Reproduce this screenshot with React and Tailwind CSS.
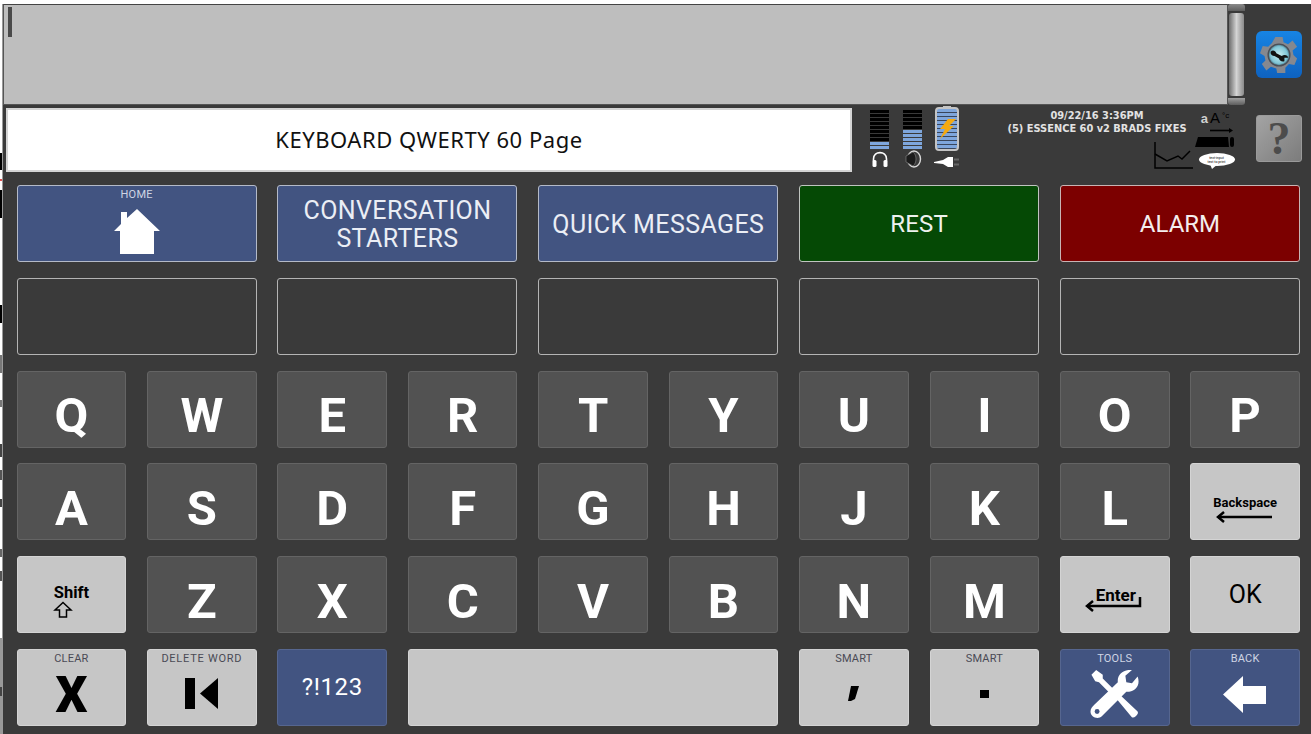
import React from "react";

const strays = [
    "top-[149px] h-[17px] bg-black",
    "top-[175px] h-[2px] bg-[#e05050]",
    "top-[186px] h-[28px] bg-black",
    "top-[301px] h-[18px] bg-black",
    "top-[351px] h-[18px] bg-[#777]",
    "top-[396px] h-[7px] bg-[#777]",
    "top-[440px] h-[13px] bg-[#444]",
    "top-[466px] h-[10px] bg-[#555]",
    "top-[495px] h-[8px] bg-[#444]",
    "top-[545px] h-[8px] bg-[#666]",
    "top-[567px] h-[10px] bg-[#555]",
    "top-[634px] h-[49px] bg-[#999]",
    "top-[683px] h-[9px] bg-[#444]",
    "top-[692px] h-[38px] bg-[#999]",
];

function Key({ children, label, labelClass = "", tone = "dark", className = "" }) {
    const tones = {
        dark: "bg-[#525252] text-white border-[#646464]",
        light: "bg-[#c6c6c6] text-black border-[#d4d4d4]",
        blue: "bg-[#425481] text-white border-[#56668f]",
        outline: "bg-[#3a3a3a] text-white border-[#b4b4b4]",
        bluebright: "bg-[#425481] text-[#ebeef5] border-[#b4bac8]",
        green: "bg-[#054905] text-[#eef2ee] border-[#c0c4c0]",
        red: "bg-[#7c0000] text-[#f4eeee] border-[#c8b4b4]",
    };
    return (
        <div className={`relative flex items-center justify-center rounded-[3px] border text-center ${tones[tone]} ${className}`}>
            {label && (
                <span className={`absolute top-[2px] left-0 right-0 text-[11px] leading-[14px] tracking-[0.2px] ${tone === "light" ? "text-[#4a4a55]" : "text-[#cfd5e4]"} ${labelClass}`}>
                    {label}
                </span>
            )}
            {children}
        </div>
    );
}

function Letter({ ch }) {
    return (
        <Key>
            <span className="text-[49px] leading-none font-bold pt-[13px]">{ch}</span>
        </Key>
    );
}

function HomeIcon() {
    return (
        <svg width="46" height="46" viewBox="0 0 46 46" className="mt-[17px]" fill="white">
            <path d="M23 0 L46 22 L40 22 L40 45 L6 45 L6 22 L0 22 L7 15 L7 3 L13 3 L13 9 Z" />
        </svg>
    );
}

function ToolsIcon() {
    return (
        <svg width="50" height="49" viewBox="0 0 52 52" className="mt-[15px]" fill="white">
            <path d="M1 5 L6 0 L13 5 L13 9 L28 24 L24 28 L9 13 L5 12 Z" />
            <path d="M50 7 C53 15 49 22 41 23 L38 23 L12 49 C8 53 0 50 0 44 C0 41 2 39 4 37 L29 13 C28 5 35 -1 44 0 L37 6 L38 13 L44 14 Z" />
            <path d="M28 31 L32 27 L50 44 C51 46 50 47 48 49 C46 51 44 51 43 49 Z" />
            <circle cx="7" cy="44" r="2.6" fill="#425481" />
        </svg>
    );
}

function BackIcon() {
    return (
        <svg width="44" height="37" viewBox="0 0 44 37" className="mt-[15px]" fill="white">
            <path d="M0 18.5 L20 0 L20 10 L43 10 L43 28 L20 28 L20 37 Z" />
        </svg>
    );
}

function GearButton() {
    return (
        <div className="w-[46px] h-[47px] rounded-[6px] bg-gradient-to-b from-[#1784e4] to-[#0e62c0] flex items-center justify-center">
            <svg width="40" height="38" viewBox="0 0 42 42">
                <defs>
                    <radialGradient id="lens" cx="0.5" cy="0.5" r="0.55">
                        <stop offset="0" stopColor="#c8eef0" />
                        <stop offset="0.7" stopColor="#7fc5d6" />
                        <stop offset="1" stopColor="#2d5364" />
                    </radialGradient>
                </defs>
                <path
                    fill="#85888f"
                    d="M17 1 L25 1 L26 7 L31 9 L36 5 L41 12 L36 16 L37 21 L41 25 L38 32 L32 31 L28 35 L28 41 L19 41 L18 36 L12 34 L7 38 L2 31 L6 27 L5 22 L0 19 L3 11 L9 12 L13 8 Z"
                />
                <circle cx="21" cy="21" r="12" fill="url(#lens)" stroke="#4a4f57" strokeWidth="1.5" />
                <path d="M12 17 C14 15 17 16 18 19 L24 22 C27 20 31 21 31 24 L27 24 L27 28 C24 29 21 27 21 25 L16 22 C13 22 11 20 12 17 Z" fill="#111" />
            </svg>
        </div>
    );
}

function HelpButton() {
    return (
        <div className="w-[46px] h-[47px] rounded-[3px] border border-[#9a9a9a] bg-gradient-to-br from-[#a4a4a4] to-[#7c7c7c] flex items-center justify-center">
            <span className="font-['Liberation_Serif',serif] font-bold text-[46px] leading-none text-[#4c4c4c]">?</span>
        </div>
    );
}

function Meter({ filled }) {
    const rows = Array.from({ length: 10 });
    return (
        <div className="flex flex-col gap-[1px] w-[19px]">
            {rows.map((_, i) => (
                <div key={i} className={`h-[3px] ${i >= 10 - filled ? "bg-[#7ea6dc]" : "bg-black"}`} />
            ))}
        </div>
    );
}

function StatusIcons() {
    return (
        <div className="flex w-[148px] shrink-0 pl-[18px] pt-[2px] gap-[14px]">
            <div className="flex flex-col items-center gap-[1px]">
                <Meter filled={2} />
                <svg width="18" height="18" viewBox="0 0 18 18" fill="none">
                    <path d="M2.5 11 V9 C2.5 0.5 15.5 0.5 15.5 9 V11" stroke="white" strokeWidth="1.6" />
                    <rect x="1.5" y="10" width="4" height="7" rx="1.5" fill="white" />
                    <rect x="12.5" y="10" width="4" height="7" rx="1.5" fill="white" />
                </svg>
            </div>
            <div className="flex flex-col items-center gap-[1px]">
                <Meter filled={5} />
                <svg width="18" height="18" viewBox="0 0 18 18" fill="none">
                    <ellipse cx="10" cy="9" rx="6.5" ry="8" stroke="#d8d8d8" strokeWidth="1.4" />
                    <path d="M2 6 L9 2 C13 5 13 13 9 16 L2 12 Z" fill="#1c1c1c" stroke="#8a8a8a" strokeWidth="0.6" />
                </svg>
            </div>
            <div className="flex flex-col items-center gap-[5px] -mt-[3px] -ml-[2px]">
                <div className="relative w-[24px] h-[44px] rounded-[4px] border-2 border-[#c4c4c4] bg-[repeating-linear-gradient(#7ea6dc_0px,#7ea6dc_3px,#39465c_3px,#39465c_4px)]">
                    <div className="absolute -top-[3px] left-[6px] w-[8px] h-[2px] bg-[#c4c4c4]" />
                    <svg width="17" height="20" viewBox="0 0 17 20" className="absolute left-[2px] top-[10px]">
                        <path d="M9 0 L17 0 L10 7 L15 7 L1 20 L6 10 L1 10 Z" fill="#f5a90f" />
                    </svg>
                </div>
                <svg width="26" height="12" viewBox="0 0 26 12">
                    <path d="M0 6 L9 4 L14 1 L19 1 L19 11 L14 11 L9 8 L0 7 Z" fill="white" />
                    <rect x="20" y="2.5" width="5" height="2" fill="#666" />
                    <rect x="20" y="7.5" width="5" height="2" fill="#666" />
                </svg>
            </div>
        </div>
    );
}

function StatusText() {
    return (
        <div className="w-[194px] shrink-0 h-[64px] flex flex-col items-center">
            <div className="flex flex-col items-center flex-1 pt-[1px] font-['DejaVu_Sans',sans-serif] font-bold text-[9.85px] leading-[13px] text-[#e2e2e2] whitespace-nowrap">
                <span>09/22/16 3:36PM</span>
                <span>(5) ESSENCE 60 v2 BRADS FIXES</span>
            </div>
            <svg width="39" height="27" viewBox="0 0 39 27" fill="none" className="self-end mb-[3px] mr-[1px]">
                <path d="M1 0 V26 H39" stroke="black" strokeWidth="1.5" />
                <path d="M1 12 L13 19 L24 14 L28 17 L36 9" stroke="black" strokeWidth="1.5" />
            </svg>
        </div>
    );
}

function FontOptions() {
    return (
        <div className="flex flex-col items-center w-[40px] ml-[1px] shrink-0 pt-[2px]">
            <div className="flex items-end gap-[2px] h-[15px] font-['Liberation_Sans',sans-serif] leading-none">
                <span className="text-[13px] font-bold text-[#d0d0d0]">a</span>
                <span className="text-[15px] text-black">A</span>
                <span className="text-[8px] text-black self-start pt-[2px]">°c</span>
            </div>
            <svg width="40" height="22" viewBox="0 0 40 22" className="mt-[1px]">
                <path d="M15 4.5 H35" stroke="black" strokeWidth="1.6" />
                <path d="M34 2 L38 4.5 L34 7 Z" fill="black" />
                <path d="M3 11 H33 L34 21 H0 Z" fill="black" />
                <rect x="35" y="11" width="4" height="10" rx="2" fill="black" />
            </svg>
            <div className="relative w-[36px] h-[13px] rounded-[50%] bg-white flex flex-col items-center justify-center mt-[5px] ml-[3px]">
                <span className="text-[3.5px] leading-[4px] text-black">text-input</span>
                <span className="text-[3.5px] leading-[4px] text-black">text to print</span>
                <svg width="8" height="5" viewBox="0 0 8 5" className="absolute -bottom-[3px] left-[11px]">
                    <path d="M0 0 H8 L2 5 Z" fill="white" />
                </svg>
            </div>
        </div>
    );
}

function Scrollbar() {
    return (
        <div className="w-[17px] h-[101px] flex flex-col items-center">
            <div className="h-[7px] w-[17px] rounded-t-[3px] bg-gradient-to-b from-[#8a8a8a] to-[#5e5e5e]" />
            <div className="flex-1 w-[15px] my-[2px] rounded-[3px] bg-gradient-to-r from-[#6e6e6e] via-[#d4d4d4] to-[#8a8a8a]" />
            <div className="h-[7px] w-[17px] rounded-b-[3px] bg-gradient-to-b from-[#a0a0a0] to-[#5e5e5e]" />
        </div>
    );
}

export default function App() {
    const row1 = ["Q", "W", "E", "R", "T", "Y", "U", "I", "O", "P"];
    const row2 = ["A", "S", "D", "F", "G", "H", "J", "K", "L"];
    const row3 = ["Z", "X", "C", "V", "B", "N", "M"];
    const topBtn = "col-span-2 text-[25px] tracking-[0.4px] pt-[2px]";

    return (
        <div className="w-[1311px] h-[734px] overflow-hidden bg-[#3a3a3a] flex flex-col font-['Roboto',sans-serif]">
            <div className="h-[4px] bg-white shrink-0" />
            <div className="flex-1 flex min-h-0">
                {/* window behind peeks out on the left edge */}
                <div className="relative w-[3px] bg-white border-r border-[#9a9a9a] shrink-0">
                    {strays.map((s) => (
                        <div key={s} className={`absolute left-0 w-[2px] ${s}`} />
                    ))}
                </div>
                <div className="flex-1 flex flex-col min-w-0">
                    {/* text entry + side buttons */}
                    <div className="flex h-[101px] shrink-0">
                        <div className="w-[1225px] shrink-0 bg-[#bebebe] border border-[#555] border-t-[#444] pl-[4px] pt-[2px]">
                            <div className="w-[4px] h-[30px] bg-[#4a4a4a]" />
                        </div>
                        <Scrollbar />
                        <div className="ml-[11px] pt-[27px]">
                            <GearButton />
                        </div>
                    </div>

                    {/* page title + status */}
                    <div className="flex h-[67px] shrink-0 pt-[3px]">
                        <div className="ml-[3px] w-[846px] h-[64px] pb-[2px] shrink-0 bg-white border-2 border-[#d4d4d4] flex items-center justify-center font-['Noto_Sans',sans-serif] text-[22px] tracking-[0.53px] text-[#111]">
                            KEYBOARD QWERTY 60 Page
                        </div>
                        <StatusIcons />
                        <StatusText />
                        <FontOptions />
                        <div className="ml-[21px] pt-[7px]">
                            <HelpButton />
                        </div>
                    </div>

                    {/* key grid */}
                    <div className="grid grid-cols-10 grid-rows-6 w-[1283.4px] h-[541px] ml-[13.6px] mt-[13px] gap-x-[20.8px] gap-y-[15.6px]">
                        <Key tone="bluebright" label="HOME" className="col-span-2">
                            <HomeIcon />
                        </Key>
                        <Key tone="bluebright" className={`${topBtn} leading-[28px]`}>
                            CONVERSATION<br />STARTERS
                        </Key>
                        <Key tone="bluebright" className={topBtn}>QUICK MESSAGES</Key>
                        <Key tone="green" className="col-span-2 text-[24px] tracking-[0.2px]">REST</Key>
                        <Key tone="red" className="col-span-2 text-[24px]">ALARM</Key>

                        <Key tone="outline" className="col-span-2" />
                        <Key tone="outline" className="col-span-2" />
                        <Key tone="outline" className="col-span-2" />
                        <Key tone="outline" className="col-span-2" />
                        <Key tone="outline" className="col-span-2" />

                        {row1.map((c) => <Letter key={c} ch={c} />)}
                        {row2.map((c) => <Letter key={c} ch={c} />)}

                        <Key tone="light">
                            <div className="flex flex-col items-center pt-[15px]">
                                <span className="text-[13px] leading-[14px] font-bold">Backspace</span>
                                <svg width="58" height="12" viewBox="0 0 58 12" fill="none" stroke="black" strokeWidth="2.5" className="mt-[1px]">
                                    <path d="M2 6 H56" />
                                    <path d="M8 1 L2 6 L8 11" />
                                </svg>
                            </div>
                        </Key>

                        <Key tone="light">
                            <div className="flex flex-col items-center pt-[14px]">
                                <span className="text-[16.5px] leading-[16px] font-bold">Shift</span>
                                <svg width="20" height="18" viewBox="0 0 20 18" fill="none" stroke="black" strokeWidth="1.5" className="-ml-[17px]">
                                    <path d="M10 1.5 L18 9 H13.5 V16 H6.5 V9 H2 Z" />
                                </svg>
                            </div>
                        </Key>
                        {row3.map((c) => <Letter key={c} ch={c} />)}
                        <Key tone="light">
                            <div className="relative w-[60px] h-[28px] mt-[13px]">
                                <span className="absolute left-[11px] -top-[1px] text-[17px] leading-[18px] font-bold">Enter</span>
                                <svg width="58" height="28" viewBox="0 0 58 28" fill="none" stroke="black" strokeWidth="2.5" className="absolute left-0 top-0">
                                    <path d="M2 19 H55 V10" />
                                    <path d="M8 14 L2 19 L8 24" />
                                </svg>
                            </div>
                        </Key>
                        <Key tone="light" className="text-[25px] text-[#111]">OK</Key>

                        <Key tone="light" label="CLEAR">
                            <span className="text-[50px] leading-none font-black mt-[15px]">X</span>
                        </Key>
                        <Key tone="light" label="DELETE WORD" labelClass="tracking-[0.75px]">
                            <svg width="33" height="31" viewBox="0 0 33 31" className="mt-[12px]">
                                <rect x="0" y="0" width="10" height="31" fill="black" />
                                <path d="M33 0 V31 L15 15.5 Z" fill="black" />
                            </svg>
                        </Key>
                        <Key tone="blue" className="text-[24px] tracking-[0.6px] text-[#dfe6f5]">?!123</Key>
                        <Key tone="light" className="col-span-3" />
                        <Key tone="light" label="SMART">
                            <svg width="12" height="16" viewBox="0 0 12 16" className="mt-[14px]">
                                <path d="M3 0 H11 L7 13 L3 15 L0 15 Z" fill="black" />
                            </svg>
                        </Key>
                        <Key tone="light" label="SMART">
                            <div className="w-[9px] h-[8px] bg-black mt-[14px]" />
                        </Key>
                        <Key tone="blue" label="TOOLS">
                            <ToolsIcon />
                        </Key>
                        <Key tone="blue" label="BACK">
                            <BackIcon />
                        </Key>
                    </div>
                </div>
            </div>
        </div>
    );
}
